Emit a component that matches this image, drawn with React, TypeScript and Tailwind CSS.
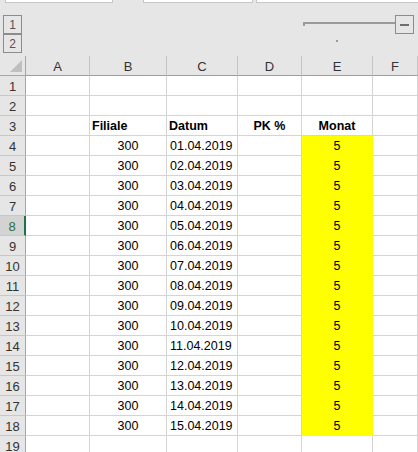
import React from 'react'

const letters = ['A', 'B', 'C', 'D', 'E', 'F']

const font = { fontFamily: '"Liberation Sans", Arial, sans-serif' }

type Row = { n: number; cells: string[]; bold?: boolean; fill?: boolean }

const rows: Row[] = []
for (let n = 1; n <= 19; n++) {
  if (n === 3) {
    rows.push({ n, cells: ['', 'Filiale', 'Datum', 'PK %', 'Monat', ''], bold: true })
  } else if (n >= 4 && n <= 18) {
    const day = String(n - 3).padStart(2, '0')
    rows.push({ n, cells: ['', '300', `${day}.04.2019`, '', '5', ''], fill: true })
  } else {
    rows.push({ n, cells: ['', '', '', '', '', ''] })
  }
}

// alignment per column: A, B, C, D, E, F
const align = ['text-left', 'text-center', 'text-left pl-[3px]', 'text-center', 'text-center', 'text-left']
const boldAlign = ['text-left', 'text-left pl-[2px]', 'text-left pl-[2px]', 'text-center', 'text-center', 'text-left']

function Cell({ text, col, row }: { text: string; col: number; row: Row }) {
  const yellow = row.fill && col === 4
  const base = 'h-[20px] border-r border-b pt-[2px] leading-[17px] text-[12.5px] text-black whitespace-nowrap overflow-hidden'
  const colour = yellow ? 'bg-[#ffff00] border-[#ffff00]' : 'bg-white border-[#d4d4d4]'
  const a = row.bold ? boldAlign[col] + ' font-bold' : align[col]
  return <div className={`${base} ${colour} ${a}`}>{text}</div>
}

export default function App() {
  return (
    <div className="w-[418px] h-[452px] overflow-hidden bg-[#e6e6e6]" style={font}>
      {/* top bar */}
      <div className="h-[56px] flex flex-col">
        <div className="h-[3px] flex">
          <div className="ml-[5px] w-[108px] bg-white border-x border-b border-[#c6c6c6]" />
          <div className="ml-[30px] w-[110px] bg-white border-x border-b border-[#c6c6c6]" />
          <div className="ml-[3px] flex-1 bg-white border-l border-b border-[#c6c6c6]" />
        </div>
        <div className="flex flex-1">
          <div className="ml-[3px] mt-[12px] flex flex-col">
            <div className="w-[19px] h-[19px] border border-[#8c8c8c] flex items-center justify-center text-[12px] text-[#555]">1</div>
            <div className="w-[19px] h-[19px] border border-[#8c8c8c] flex items-center justify-center text-[12px] text-[#555]">2</div>
          </div>
          <div className="ml-auto mr-[4px] mt-[12px] flex items-start">
            <div className="w-[92px] pt-[7px]">
              <div className="h-[4px] border-t-2 border-l-2 border-[#9a9a9a]" />
              <div className="mt-[14px] ml-[33px] w-[2px] h-[2px] bg-[#9a9a9a]" />
            </div>
            <div className="w-[19px] h-[19px] border border-[#8c8c8c] flex items-center justify-center">
              <div className="w-[9px] h-[2px] bg-[#6e6e6e]" />
            </div>
          </div>
        </div>
      </div>

      {/* sheet */}
      <div className="grid grid-cols-[26px_64px_77px_71px_64px_71px_1fr]">
        <div className="h-[20px] border-r border-b border-[#a6a6a6] flex items-end justify-end pr-[3px] pb-[3px]">
          <svg width="12" height="12" viewBox="0 0 12 12">
            <polygon points="12,0 12,12 0,12" fill="#bfbfbf" />
          </svg>
        </div>
        {letters.map((l) => (
          <div
            key={l}
            className="h-[20px] border-r border-r-[#c4c4c4] border-b border-b-[#9e9e9e] pt-[2px] leading-[17px] text-center text-[13px] text-[#333]"
          >
            {l}
          </div>
        ))}

        {rows.map((row) => (
          <React.Fragment key={row.n}>
            {row.n === 8 ? (
              <div className="h-[20px] bg-[#d3d3d3] border-r-2 border-r-[#217346] border-b border-b-[#c8c8c8] pt-[2px] leading-[17px] text-center text-[13px] text-[#217346]">
                {row.n}
              </div>
            ) : (
              <div className="h-[20px] border-r border-r-[#a6a6a6] border-b border-b-[#c8c8c8] pt-[2px] leading-[17px] text-center text-[13px] text-[#333]">
                {row.n}
              </div>
            )}
            {row.cells.map((c, i) => (
              <Cell key={i} text={c} col={i} row={row} />
            ))}
          </React.Fragment>
        ))}
      </div>
    </div>
  )
}
